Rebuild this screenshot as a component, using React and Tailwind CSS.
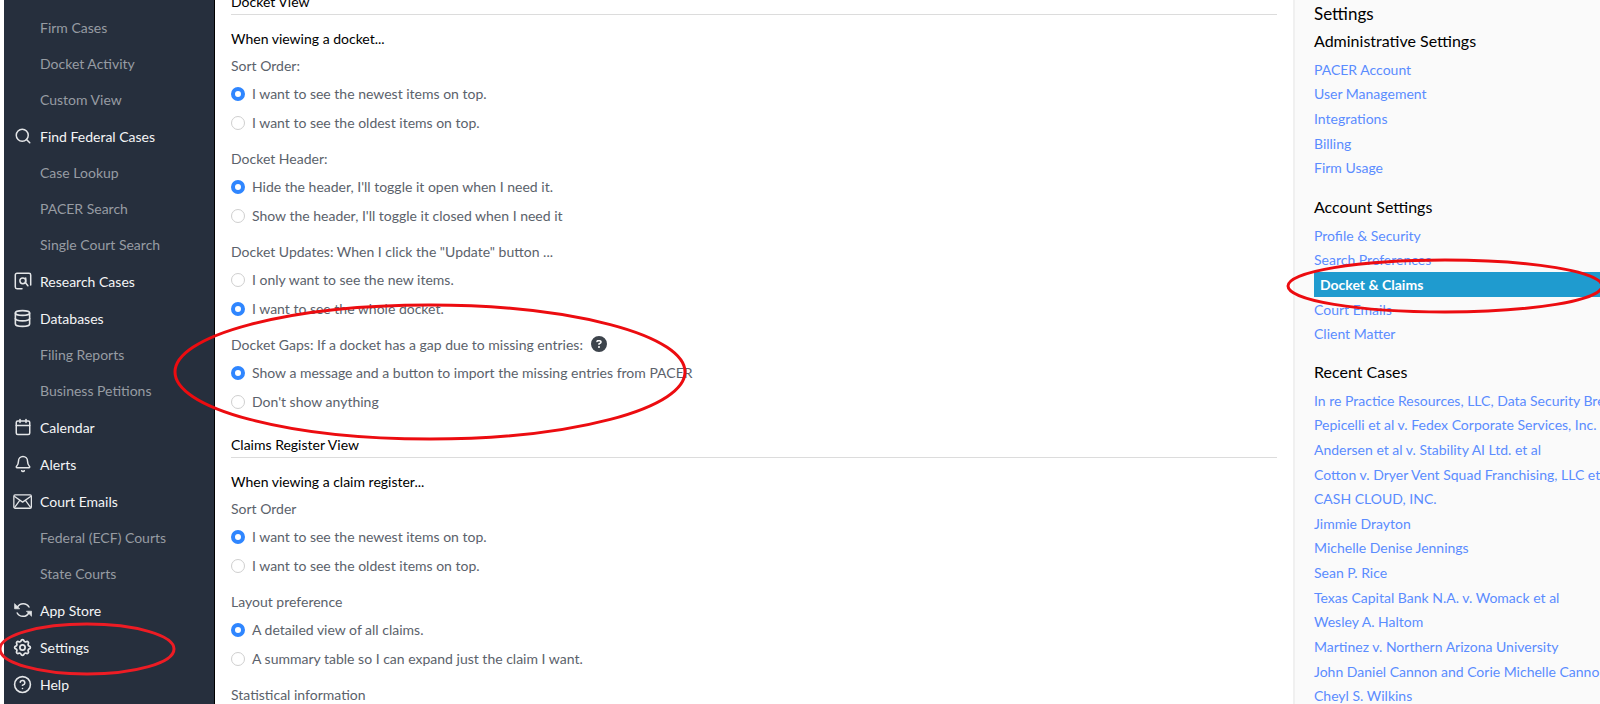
import { Fragment, useId } from "react";
import { Search, Database, Calendar, Bell, CircleHelp } from "lucide-react";
import { TbSettings } from "react-icons/tb";
import { FaCircleQuestion } from "react-icons/fa6";

function ResearchIcon() {
  return (
    <svg viewBox="0 0 18 18" className="size-[18px]" fill="none" stroke="currentColor" strokeWidth="1.5" strokeLinecap="round" strokeLinejoin="round">
      <path d="M8 16.8H3a1.7 1.7 0 0 1-1.7-1.7V3A1.7 1.7 0 0 1 3 1.3h12A1.7 1.7 0 0 1 16.7 3v10" />
      <circle cx="8.8" cy="8.8" r="2.9" />
      <path d="M11.7 6v5l2.2 2.8" />
    </svg>
  );
}

function EnvelopeIcon() {
  return (
    <svg viewBox="0 0 18 18" className="size-[19px]" fill="none" stroke="currentColor" strokeWidth="1.2" strokeLinejoin="round">
      <rect x="0.8" y="2.8" width="16.6" height="12.6" rx="1.2" />
      <path d="M1.2 4l7.9 5.6L17 4M1.4 14.8l5-6.8M16.8 14.8l-5-6.8" />
    </svg>
  );
}

function SyncIcon() {
  return (
    <svg viewBox="0 0 18 18" className="size-[18px]" fill="none" stroke="currentColor" strokeWidth="1.5" strokeLinecap="round" strokeLinejoin="round">
      <path d="M3.4 6.2A6.6 6.6 0 0 1 15 6M14.8 11.8A6.6 6.6 0 0 1 3.2 12" />
      <path d="M.6 3v4.8h4.8zM17.6 15v-4.8h-4.8z" fill="currentColor" strokeWidth="0.7" />
    </svg>
  );
}

const NAV = [
  { children: ["Firm Cases", "Docket Activity", "Custom View"] },
  { label: "Find Federal Cases", icon: <Search size={18} strokeWidth={2} />, children: ["Case Lookup", "PACER Search", "Single Court Search"] },
  { label: "Research Cases", icon: <ResearchIcon /> },
  { label: "Databases", icon: <Database size={19} strokeWidth={2} />, children: ["Filing Reports", "Business Petitions"] },
  { label: "Calendar", icon: <Calendar size={18} strokeWidth={2} /> },
  { label: "Alerts", icon: <Bell size={18} strokeWidth={2} /> },
  { label: "Court Emails", icon: <EnvelopeIcon />, children: ["Federal (ECF) Courts", "State Courts"] },
  { label: "App Store", icon: <SyncIcon /> },
  { label: "Settings", icon: <TbSettings size={21} strokeWidth={2} />, marked: true },
  { label: "Help", icon: <CircleHelp size={19} strokeWidth={2} /> },
];

const SECTIONS = [
  {
    title: "Docket View",
    heading: "When viewing a docket...",
    groups: [
      { label: "Sort Order:", options: ["I want to see the newest items on top.", "I want to see the oldest items on top."], selected: 0 },
      { label: "Docket Header:", options: ["Hide the header, I'll toggle it open when I need it.", "Show the header, I'll toggle it closed when I need it"], selected: 0 },
      { label: 'Docket Updates: When I click the "Update" button ...', options: ["I only want to see the new items.", "I want to see the whole docket."], selected: 1 },
      { label: "Docket Gaps: If a docket has a gap due to missing entries:", options: ["Show a message and a button to import the missing entries from PACER", "Don't show anything"], selected: 0, marked: true },
    ],
  },
  {
    title: "Claims Register View",
    heading: "When viewing a claim register...",
    groups: [
      { label: "Sort Order", options: ["I want to see the newest items on top.", "I want to see the oldest items on top."], selected: 0 },
      { label: "Layout preference", options: ["A detailed view of all claims.", "A summary table so I can expand just the claim I want."], selected: 0 },
      { label: "Statistical information", options: [], selected: 0 },
    ],
  },
];

const RECENT = [
  "In re Practice Resources, LLC, Data Security Breach",
  "Pepicelli et al v. Fedex Corporate Services, Inc.",
  "Andersen et al v. Stability AI Ltd. et al",
  "Cotton v. Dryer Vent Squad Franchising, LLC et al",
  "CASH CLOUD, INC.",
  "Jimmie Drayton",
  "Michelle Denise Jennings",
  "Sean P. Rice",
  "Texas Capital Bank N.A. v. Womack et al",
  "Wesley A. Haltom",
  "Martinez v. Northern Arizona University",
  "John Daniel Cannon and Corie Michelle Cannon",
  "Cheyl S. Wilkins",
];

function Sidebar() {
  return (
    <nav className="ml-1 flex w-[211px] shrink-0 flex-col gap-px border-r border-black bg-[#262f3d] pt-[9px] text-[14px]">
      {NAV.map((group, i) => (
        <ul key={i}>
          {group.label && (
            <li className="relative">
              <a href="#" className="flex h-9 items-center text-[#f4f5f6]">
                <span className="flex w-9 justify-center pl-px text-[#e4e6e8]">{group.icon}</span>
                {group.label}
              </a>
              {group.marked && (
                <svg viewBox="0 0 180 56" className="pointer-events-none absolute -top-[8px] -left-[6px] z-10 h-[56px] w-[180px]" fill="none" stroke="#ed1c24" strokeWidth="3">
                  <ellipse cx="89" cy="28" rx="87" ry="25" />
                </svg>
              )}
            </li>
          )}
          {group.children?.map((child) => (
            <li key={child}>
              <a href="#" className="flex h-9 items-center pl-9 text-[#979ca3]">{child}</a>
            </li>
          ))}
        </ul>
      ))}
    </nav>
  );
}

function RadioGroup({ label, options, selected, marked }) {
  const name = useId();
  return (
    <div className="relative mb-[7px]">
      <fieldset>
        <legend className="flex h-7 items-center gap-2">
          {label}
          {marked && (
            <button type="button" aria-label="About docket gaps" className="text-[#3d444c]">
              <FaCircleQuestion size={16} />
            </button>
          )}
        </legend>
        {options.map((option, i) => (
          <label key={option} className="flex h-[29px] items-center gap-[7px]">
            <input
              type="radio"
              name={name}
              defaultChecked={i === selected}
              className="size-[14px] appearance-none rounded-full border border-[#cfcfcf] bg-white checked:border-4 checked:border-[#2f86ff]"
            />
            {option}
          </label>
        ))}
      </fieldset>
      {marked && (
        <svg viewBox="0 0 516 140" className="pointer-events-none absolute -top-[28px] -left-[59px] z-10 h-[140px] w-[516px]" fill="none" stroke="#ec0c10" strokeWidth="3">
          <ellipse cx="258" cy="70" rx="255" ry="67" />
        </svg>
      )}
    </div>
  );
}

function LinkList({ items, active, className }) {
  return (
    <ul className={`grid auto-rows-fr text-[14px] whitespace-nowrap ${className}`}>
      {items.map((item) =>
        item === active ? (
          <li key={item} className="relative flex">
            <a href="#" aria-current="page" className="flex flex-1 items-center bg-[#1f9bcf] pl-[6px] font-bold text-white">{item}</a>
            <svg viewBox="0 0 318 56" className="pointer-events-none absolute -top-[14px] -left-[28px] h-[56px] w-[318px]" fill="none" stroke="#ec0c10" strokeWidth="3">
              <ellipse cx="159" cy="28" rx="157" ry="26" />
            </svg>
          </li>
        ) : (
          <li key={item} className="flex items-center">
            <a href="#" className="text-[#5a8cff]">{item}</a>
          </li>
        ),
      )}
    </ul>
  );
}

function SettingsPanel() {
  const heading = "mb-0.5 flex h-7 items-center text-[16px] text-black";
  return (
    <aside className="w-[307px] shrink-0 border-l-2 border-[#f0f0f0] bg-[#fafafa] pl-[19px]">
      <h2 className="flex h-[27px] items-center text-[17px] text-black">Settings</h2>
      <h3 className={heading}>Administrative Settings</h3>
      <LinkList className="mb-[13px] min-h-[123px]" items={["PACER Account", "User Management", "Integrations", "Billing", "Firm Usage"]} />
      <h3 className={heading}>Account Settings</h3>
      <LinkList className="mb-3 min-h-[123px]" items={["Profile & Security", "Search Preferences", "Docket & Claims", "Court Emails", "Client Matter"]} active="Docket & Claims" />
      <h3 className={heading}>Recent Cases</h3>
      <LinkList className="min-h-80" items={RECENT} />
    </aside>
  );
}

export default function App() {
  return (
    <div className="flex h-screen overflow-hidden bg-white font-['Lato','Noto_Sans',sans-serif]">
      <Sidebar />
      <main className="min-w-0 flex-1 px-4 text-[14px] text-[#5b626b]">
        <div className="-mt-[10px]">
          {SECTIONS.map((section) => (
            <Fragment key={section.title}>
              <h2 className="mb-[10px] flex h-[25px] items-center border-b border-[#dcdcdc] pb-0.5 text-black">{section.title}</h2>
              <h3 className="flex h-[26px] items-center text-black">{section.heading}</h3>
              <div className="mb-[10px] flow-root">
                {section.groups.map((group) => (
                  <RadioGroup key={group.label} {...group} />
                ))}
              </div>
            </Fragment>
          ))}
        </div>
      </main>
      <SettingsPanel />
    </div>
  );
}
